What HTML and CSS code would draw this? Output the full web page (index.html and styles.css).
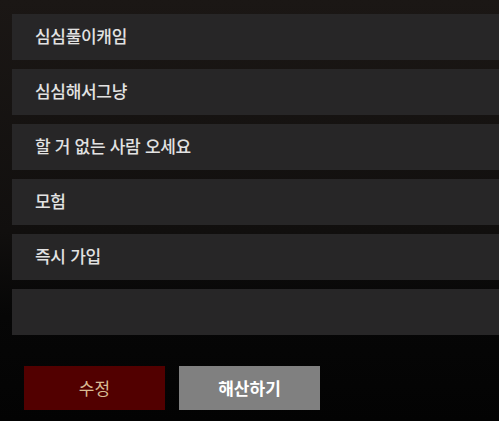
FILE: index.html
```html
<!DOCTYPE html>
<html lang="ko">
<head>
  <meta charset="UTF-8" />
  <meta name="viewport" content="width=device-width, initial-scale=1" />
  <title>모임 설정</title>
  <link rel="stylesheet" href="styles.css">
</head>
<body>
  <main class="panel">
    <ul class="fields">
      <li class="field">심심풀이캐임</li>
      <li class="field">심심해서그냥</li>
      <li class="field">할 거 없는 사람 오세요</li>
      <li class="field">모험</li>
      <li class="field">즉시 가입</li>
      <li class="field"></li>
    </ul>

    <div class="actions">
      <button class="btn btn-edit">수정</button>
      <button class="btn btn-disband">해산하기</button>
    </div>
  </main>
</body>
</html>
```

FILE: styles.css
```css
/* Reset & base */
* {
  margin: 0;
  padding: 0;
  box-sizing: border-box;
}
html, body {
  height: 100%;
}
body {
  font-family: "Noto Sans CJK KR", "Noto Sans", sans-serif;
  background: linear-gradient(to bottom, #1b1715 0%, #110f0e 55%, #060606 75%, #030303 100%);
  color: #e2e2e2;
  overflow: hidden;
}
.panel {
  padding: 14px 0 0 12px;
}
.fields {
  list-style: none;
  display: flex;
  flex-direction: column;
  gap: 9.5px;
}
.field {
  height: 45.5px;
  background-color: #272627;
  padding: 0 0 3px 23px;
  display: flex;
  align-items: center;
  font-size: 17px;
  font-weight: 500;
  letter-spacing: -0.3px;
}
.actions {
  display: flex;
  gap: 14px;
  margin-top: 31px;
  padding-left: 12px;
}
.btn {
  width: 141px;
  height: 44px;
  border: none;
  font-family: inherit;
  font-size: 17px;
  cursor: pointer;
}
.btn-edit {
  background-color: #520000;
  color: #d9bc93;
  font-weight: 400;
}
.btn-disband {
  background-color: #808080;
  color: #ffffff;
  font-weight: 700;
}
```
